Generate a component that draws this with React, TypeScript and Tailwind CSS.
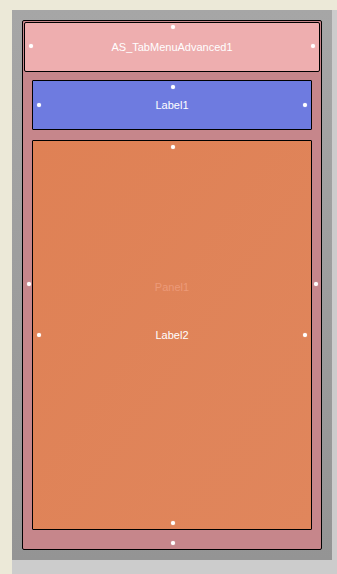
import React from "react";

const font = { fontFamily: '"Liberation Sans", Arial, sans-serif' };

// design-time grip handle drawn over a control
function Dot({ className }: { className: string }) {
  return (
    <span
      className={`absolute h-[4px] w-[4px] rounded-full bg-white shadow-[0_0_1px_rgba(255,255,255,0.8)] ${className}`}
    />
  );
}

export default function App() {
  return (
    <div
      className="h-[574px] w-[337px] overflow-hidden bg-[#ECE9D8] pl-[12px] pt-[10px]"
      style={font}
    >
      <div className="h-[564px] w-[325px] bg-[#CCCCCC]">
        <div className="h-[550px] w-[320px] bg-gradient-to-b from-[#a6a6a6] to-[#949494] pl-[10px] pt-[10px]">
          {/* form */}
          <div className="relative flex h-[530px] w-[300px] flex-col rounded-[2px] border border-black bg-[#C6868B] p-[1px]">
            {/* tab header */}
            <div className="relative flex h-[50px] w-full items-center justify-center rounded-[2px] border border-black bg-[#EEAEAF] text-[11px] text-white">
              AS_TabMenuAdvanced1
              <Dot className="left-[146px] top-[2px]" />
              <Dot className="left-[4px] top-[21px]" />
              <Dot className="right-[4px] top-[21px]" />
            </div>

            <div className="flex flex-col gap-[10px] px-[8px] pt-[8px]">
              {/* Label1 */}
              <div className="relative flex h-[50px] w-[280px] items-center justify-center rounded-[1px] border border-black bg-[#6E7BE0] text-[11px] text-white">
                Label1
                <Dot className="left-[138px] top-[4px]" />
                <Dot className="left-[4px] top-[22px]" />
                <Dot className="right-[4px] top-[22px]" />
              </div>

              {/* Label2 panel */}
              <div className="relative flex h-[390px] w-[280px] items-center justify-center rounded-[1px] border border-black bg-gradient-to-br from-[#DF8155] to-[#E0865C] text-[11px] text-white">
                <span className="absolute left-0 right-0 top-[138px] text-center text-[#EC9A78]">
                  Panel1
                </span>
                Label2
                <Dot className="left-[138px] top-[4px]" />
                <Dot className="bottom-[4px] left-[138px]" />
                <Dot className="left-[4px] top-[192px]" />
                <Dot className="right-[4px] top-[192px]" />
              </div>
            </div>

            <Dot className="left-[4px] top-[261px]" />
            <Dot className="right-[3px] top-[261px]" />
            <Dot className="bottom-[4px] left-[148px]" />
          </div>
        </div>
      </div>
    </div>
  );
}
